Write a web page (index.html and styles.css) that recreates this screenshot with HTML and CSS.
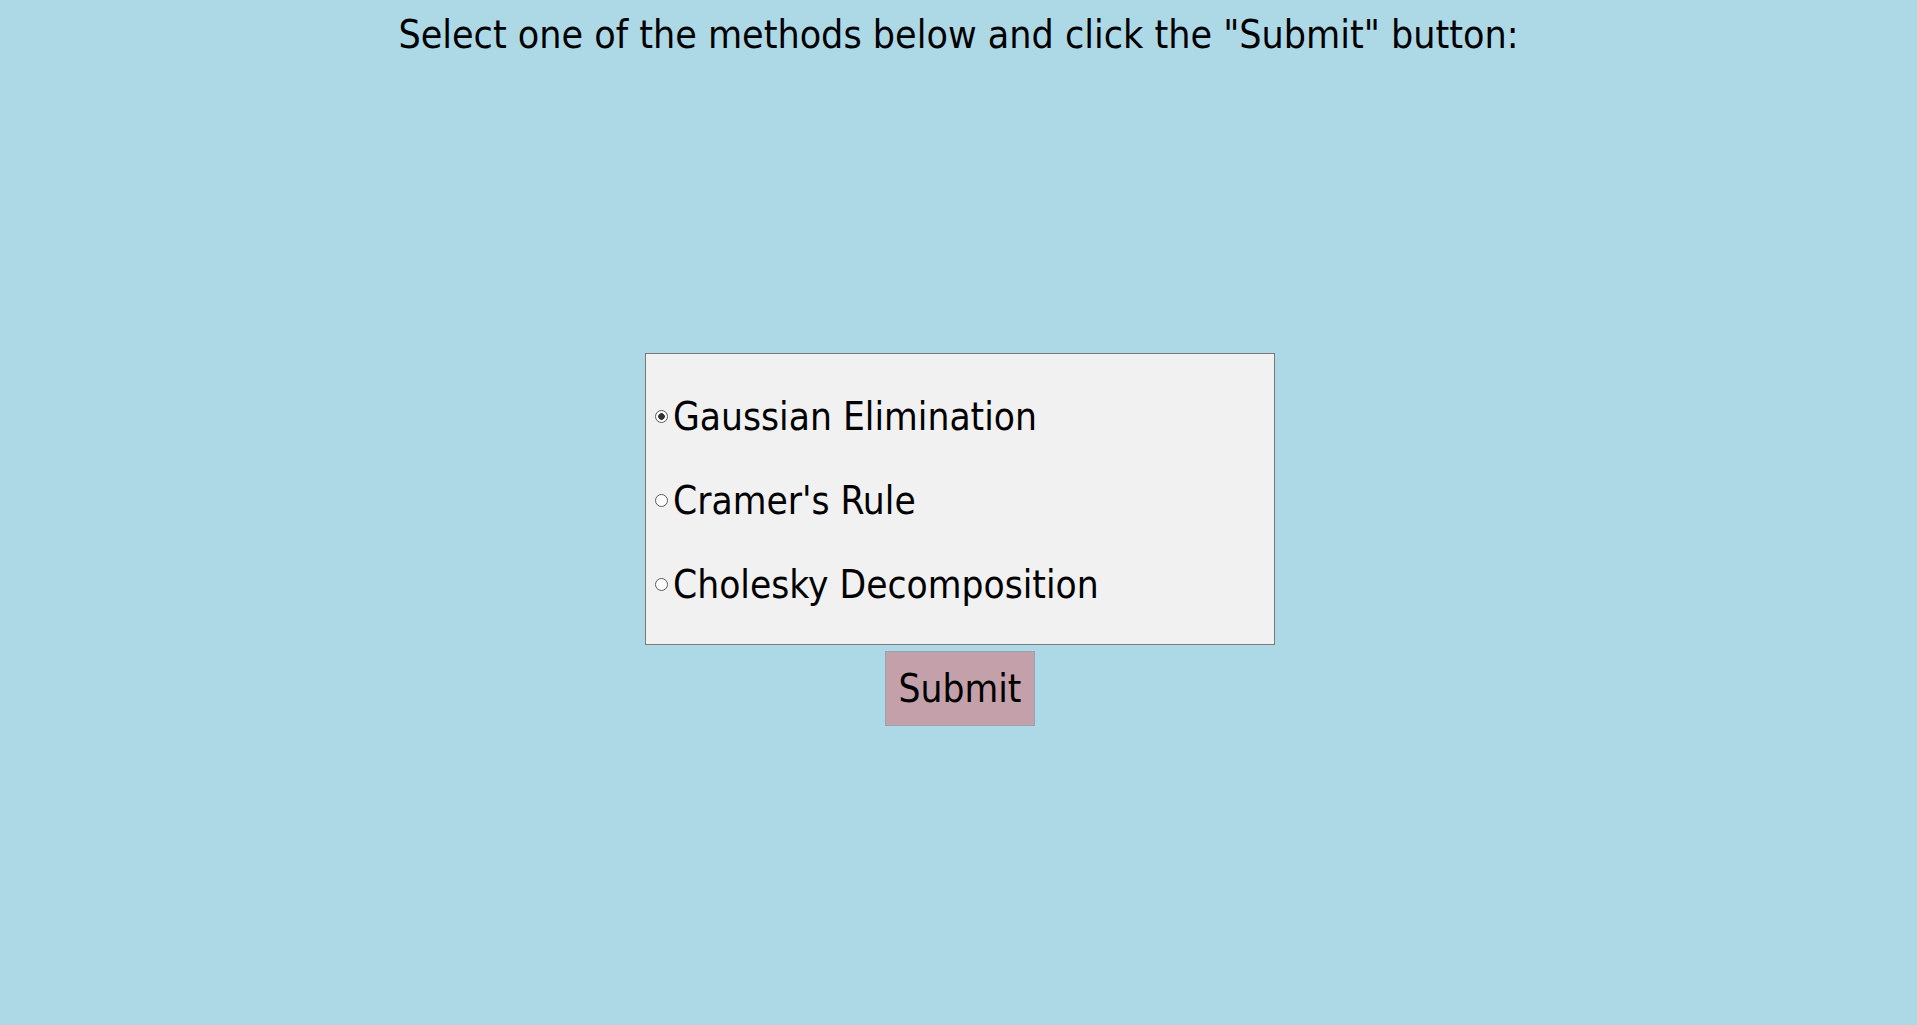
FILE: index.html
```html
<!DOCTYPE html>
<html lang="en">
<head>
<meta charset="utf-8">
<title>Select a method</title>
<link rel="stylesheet" href="styles.css">
</head>
<body>
<h1 class="title">Select one of the methods below and click the "Submit" button:</h1>
<form class="form">
  <div class="methods">
    <label class="option"><input type="radio" name="method" value="gauss" checked><span>Gaussian Elimination</span></label>
    <label class="option"><input type="radio" name="method" value="cramer"><span>Cramer's Rule</span></label>
    <label class="option"><input type="radio" name="method" value="cholesky"><span>Cholesky Decomposition</span></label>
  </div>
  <button type="button" class="submit">Submit</button>
</form>
</body>
</html>
```

FILE: styles.css
```css
html, body {
  margin: 0;
  padding: 0;
}
body {
  background: #add8e6;
  font-family: "DejaVu Sans Condensed", "DejaVu Sans", sans-serif;
  color: #000;
  min-height: 1025px;
}
.title {
  margin: 0;
  padding-top: 12px;
  font-size: 39px;
  font-weight: normal;
  text-align: center;
  line-height: normal;
}
.form {
  display: flex;
  flex-direction: column;
  align-items: center;
  margin-top: 296px;
  padding-left: 3px;
}
.methods {
  box-sizing: border-box;
  width: 630px;
  height: 292px;
  background: #f1f1f1;
  border: 1px solid #7a7a7a;
  padding: 20px 0 18px 4px;
  display: flex;
  flex-direction: column;
}
.option {
  height: 84px;
  display: flex;
  align-items: center;
  font-size: 38.5px;
}
.option input {
  appearance: none;
  -webkit-appearance: none;
  box-sizing: border-box;
  margin: 0 5px 0 5px;
  width: 13px;
  height: 13px;
  border: 1px solid #5a5a5a;
  border-radius: 50%;
  background: #fff;
  flex: none;
}
.option input:checked {
  background: radial-gradient(circle, #333 0, #333 3px, #fff 3.6px);
}
.submit {
  box-sizing: border-box;
  margin-top: 6px;
  width: 150px;
  height: 75px;
  background: #c4a0aa;
  border: 1px solid #9aa3ad;
  font-family: inherit;
  font-size: 38.5px;
  color: #000;
  padding: 0;
}
```
